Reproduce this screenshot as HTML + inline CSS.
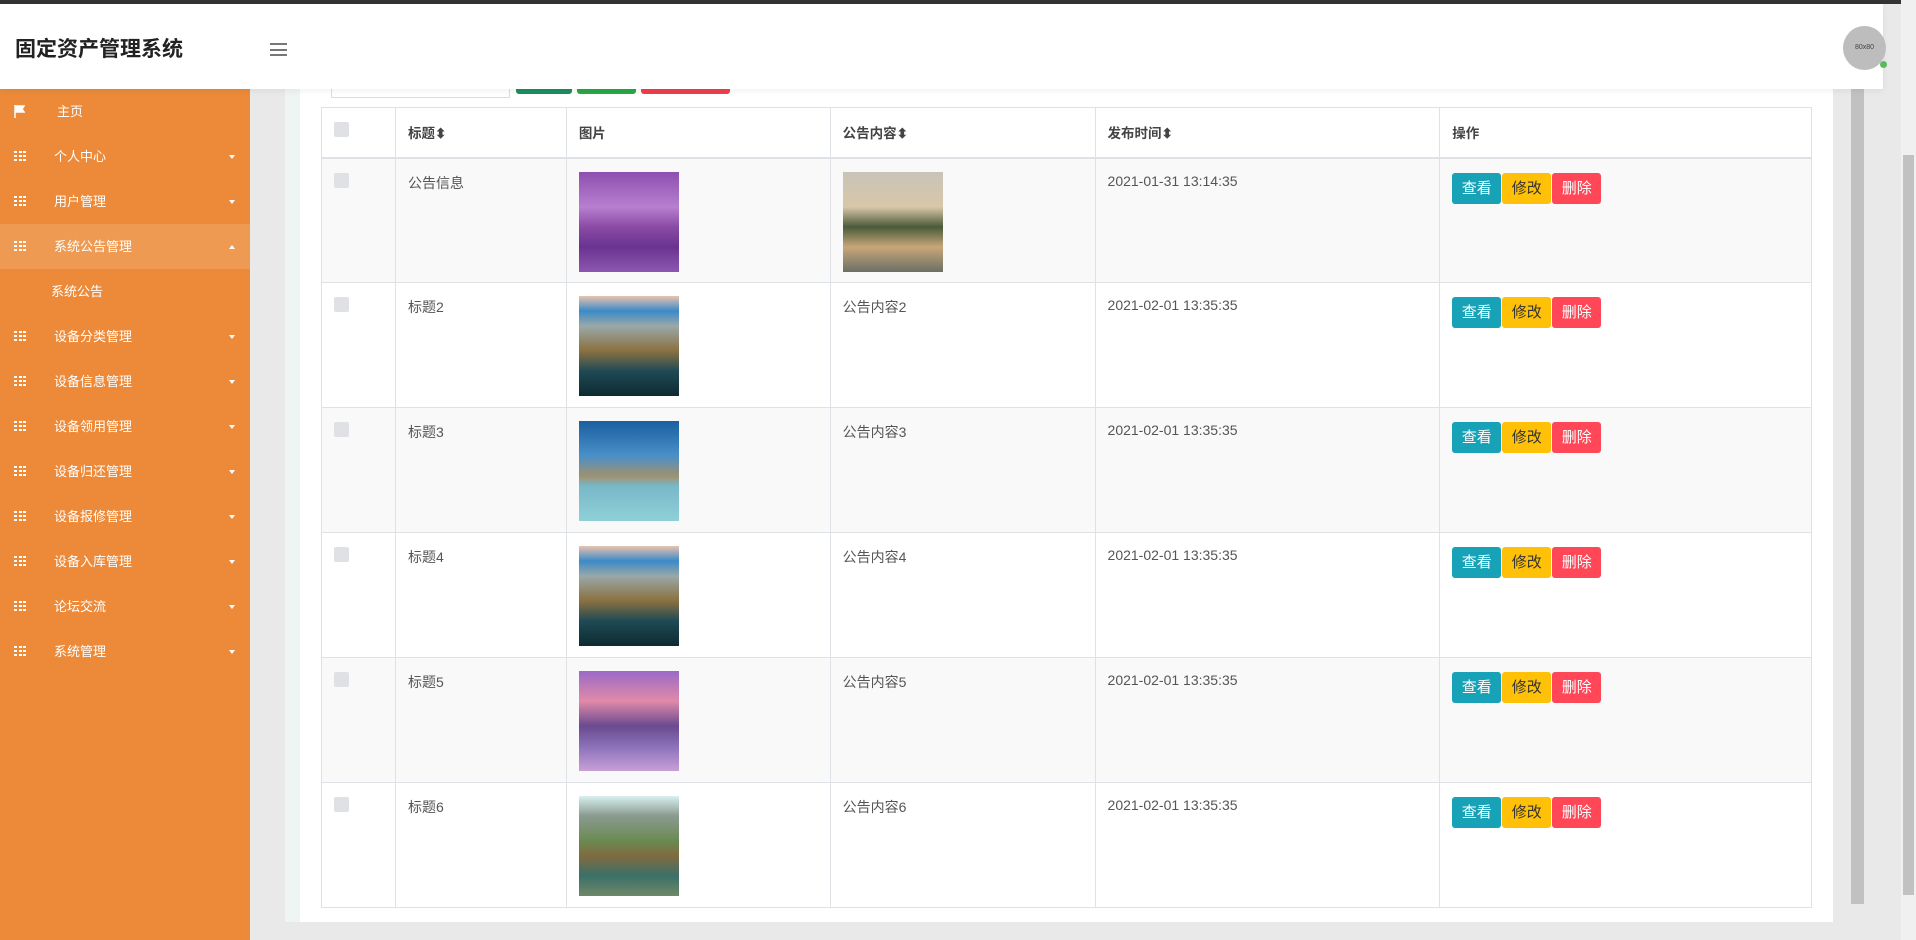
<!DOCTYPE html>
<html><head><meta charset="utf-8">
<style>
*{margin:0;padding:0;box-sizing:border-box}
body{width:1916px;height:940px;overflow:hidden;background:#e9e9e9;font-family:"Liberation Sans","Noto Sans CJK SC",sans-serif;position:relative}
.topbar{position:absolute;left:0;top:0;width:1916px;height:4px;background:#333}
.header{position:absolute;left:0;top:4px;width:1883px;height:85px;background:#fff;box-shadow:0 2px 6px rgba(0,0,0,.06);z-index:5}
.title{position:absolute;left:15px;top:29px;font-size:21px;font-weight:bold;color:#222}
.ham{position:absolute;left:270px;top:39px;width:17px}
.ham i{display:block;height:2px;background:#777;margin-bottom:3.5px}
.avatar{position:absolute;left:1843px;top:22px;width:43px;height:44px;border-radius:50%;background:#bdbdbd;font-size:7px;color:#444;text-align:center;line-height:44px}
.dot{position:absolute;left:1880px;top:57px;width:7px;height:7px;border-radius:50%;background:#5cb85c}
.side{position:absolute;left:0;top:89px;width:250px;height:851px;background:#ec8a3a}
.it{position:absolute;left:0;width:250px;height:45px;color:#fff;font-size:13px;line-height:45px}
.it .ic{position:absolute;left:14px;top:17px;width:12px;height:10px;
background:
linear-gradient(#fff,#fff) 0 0/3px 2px no-repeat,linear-gradient(#fff,#fff) 4.5px 0/3px 2px no-repeat,linear-gradient(#fff,#fff) 9px 0/3px 2px no-repeat,
linear-gradient(#fff,#fff) 0 4px/3px 2px no-repeat,linear-gradient(#fff,#fff) 4.5px 4px/3px 2px no-repeat,linear-gradient(#fff,#fff) 9px 4px/3px 2px no-repeat,
linear-gradient(#fff,#fff) 0 8px/3px 2px no-repeat,linear-gradient(#fff,#fff) 4.5px 8px/3px 2px no-repeat,linear-gradient(#fff,#fff) 9px 8px/3px 2px no-repeat}
.it .tx{position:absolute;left:54px}
.it .car{position:absolute;left:229px;top:21px;width:0;height:0;border-left:3.5px solid transparent;border-right:3.5px solid transparent;border-top:4px solid #fff}
.it .car.up{border-top:none;border-bottom:4px solid #fff}
.main{position:absolute;left:285px;top:89px;width:1548px;height:833px;background:#eef5f2}
.panel{position:absolute;left:300px;top:89px;width:1533px;height:833px;background:#fff}
.tb{position:absolute;top:89px;height:5px;border-radius:0 0 3px 3px}
table{position:absolute;left:321px;top:107px;width:1491px;border-collapse:collapse;font-size:14px;color:#555}
td,th{border:1px solid #dee2e6;vertical-align:top;text-align:left;padding:0 12px}
th{height:50px;vertical-align:middle;font-weight:bold;color:#444;font-size:13.5px;border-bottom:2px solid #dee2e6}
td{height:125px;padding-top:14px}
tr.s td{background:#f9f9f9}
.cb{display:inline-block;width:15px;height:15px;background:#dfe1e5;border-radius:2px}
.img{width:100px;height:100px;margin-top:-1px}
.btn{display:inline-block;height:31px;line-height:31px;width:49px;text-align:center;color:#fff;font-size:15px;border-radius:3px;margin-right:1px}
.sb1{position:absolute;left:1851px;top:89px;width:13px;height:815px;background:#c1c1c1}
.sb2{position:absolute;left:1901px;top:0;width:15px;height:940px;background:#f0f0f0}
.sb2 i{position:absolute;left:2px;top:155px;width:11px;height:740px;background:#c1c1c1}
</style></head><body>
<div class="topbar"></div>
<div class="main"></div>
<div class="panel"></div>
<div style="position:absolute;left:331px;top:80px;width:179px;height:18px;border:1px solid #ddd;background:#fff"></div>
<div class="tb" style="left:516px;width:56px;background:#1c8f5d"></div>
<div class="tb" style="left:577px;width:59px;background:#28a745"></div>
<div class="tb" style="left:641px;width:89px;background:#f03e4e"></div>
<div class="header">
<div class="title">固定资产管理系统</div>
<div class="ham"><i></i><i></i><i></i></div>
<div class="avatar">80x80</div>
<div class="dot"></div>
</div>
<div class="side">
<div class="it" style="top:0"><svg style="position:absolute;left:14px;top:16px" width="11" height="13" viewBox="0 0 11 13"><path d="M1 0v13M1 1h9l-2 3 2 3H1" fill="#fff" stroke="#fff" stroke-width="1.5"/></svg><span class="tx" style="left:57px">主页</span></div>
<div class="it" style="top:45px"><i class="ic"></i><span class="tx">个人中心</span><i class="car"></i></div>
<div class="it" style="top:90px"><i class="ic"></i><span class="tx">用户管理</span><i class="car"></i></div>
<div class="it" style="top:135px;background:#ee9a52"><i class="ic"></i><span class="tx">系统公告管理</span><i class="car up"></i></div>
<div class="it" style="top:180px"><span class="tx" style="left:51px">系统公告</span></div>
<div class="it" style="top:225px"><i class="ic"></i><span class="tx">设备分类管理</span><i class="car"></i></div>
<div class="it" style="top:270px"><i class="ic"></i><span class="tx">设备信息管理</span><i class="car"></i></div>
<div class="it" style="top:315px"><i class="ic"></i><span class="tx">设备领用管理</span><i class="car"></i></div>
<div class="it" style="top:360px"><i class="ic"></i><span class="tx">设备归还管理</span><i class="car"></i></div>
<div class="it" style="top:405px"><i class="ic"></i><span class="tx">设备报修管理</span><i class="car"></i></div>
<div class="it" style="top:450px"><i class="ic"></i><span class="tx">设备入库管理</span><i class="car"></i></div>
<div class="it" style="top:495px"><i class="ic"></i><span class="tx">论坛交流</span><i class="car"></i></div>
<div class="it" style="top:540px"><i class="ic"></i><span class="tx">系统管理</span><i class="car"></i></div>
</div>
<table>
<colgroup><col style="width:74px"><col style="width:171px"><col style="width:264px"><col style="width:265px"><col style="width:345px"><col style="width:372px"></colgroup>
<tr><th><span class="cb" style="margin-top:-8px;vertical-align:middle"></span></th><th>标题⬍</th><th>图片</th><th>公告内容⬍</th><th>发布时间⬍</th><th>操作</th></tr>
<tr class="s"><td><span class="cb"></span></td><td>公告信息</td><td><div class="img" style="background:linear-gradient(180deg,#8e4fb0,#b77fcf 35%,#8a4aa5 55%,#6a3390 75%,#8c57b0)"></div></td><td><div class="img" style="background:linear-gradient(180deg,#c9c3b8,#d8c7a8 35%,#4a5a3a 55%,#c8a778 75%,#6b6f66)"></div></td><td>2021-01-31 13:14:35</td><td><span class="btn" style="background:#17a2b8">查看</span><span class="btn" style="background:#ffc107;color:#333">修改</span><span class="btn" style="background:#ff4757">删除</span></td></tr>
<tr><td><span class="cb"></span></td><td>标题2</td><td><div class="img" style="background:linear-gradient(180deg,#e8c3b0,#3a8ac8 15%,#9aa8a8 30%,#8a7040 55%,#1f4a55 75%,#0e2a30)"></div></td><td>公告内容2</td><td>2021-02-01 13:35:35</td><td><span class="btn" style="background:#17a2b8">查看</span><span class="btn" style="background:#ffc107;color:#333">修改</span><span class="btn" style="background:#ff4757">删除</span></td></tr>
<tr class="s"><td><span class="cb"></span></td><td>标题3</td><td><div class="img" style="background:linear-gradient(180deg,#1a5fa0,#4a90c8 35%,#a09070 55%,#78b8c8 65%,#8fd0d8)"></div></td><td>公告内容3</td><td>2021-02-01 13:35:35</td><td><span class="btn" style="background:#17a2b8">查看</span><span class="btn" style="background:#ffc107;color:#333">修改</span><span class="btn" style="background:#ff4757">删除</span></td></tr>
<tr><td><span class="cb"></span></td><td>标题4</td><td><div class="img" style="background:linear-gradient(180deg,#e8c3b0,#3a8ac8 15%,#9aa8a8 30%,#8a7040 55%,#1f4a55 75%,#0e2a30)"></div></td><td>公告内容4</td><td>2021-02-01 13:35:35</td><td><span class="btn" style="background:#17a2b8">查看</span><span class="btn" style="background:#ffc107;color:#333">修改</span><span class="btn" style="background:#ff4757">删除</span></td></tr>
<tr class="s"><td><span class="cb"></span></td><td>标题5</td><td><div class="img" style="background:linear-gradient(180deg,#9a6ac8,#e08aa8 30%,#6a4a90 55%,#8a70b8 75%,#c8a0d8)"></div></td><td>公告内容5</td><td>2021-02-01 13:35:35</td><td><span class="btn" style="background:#17a2b8">查看</span><span class="btn" style="background:#ffc107;color:#333">修改</span><span class="btn" style="background:#ff4757">删除</span></td></tr>
<tr><td><span class="cb"></span></td><td>标题6</td><td><div class="img" style="background:linear-gradient(180deg,#d8f0f0,#8a9a90 20%,#6a8a50 45%,#806a40 60%,#3a7068 80%,#708868)"></div></td><td>公告内容6</td><td>2021-02-01 13:35:35</td><td><span class="btn" style="background:#17a2b8">查看</span><span class="btn" style="background:#ffc107;color:#333">修改</span><span class="btn" style="background:#ff4757">删除</span></td></tr>
</table>
<div class="sb1"></div>
<div class="sb2"><i></i></div>
</body></html>
